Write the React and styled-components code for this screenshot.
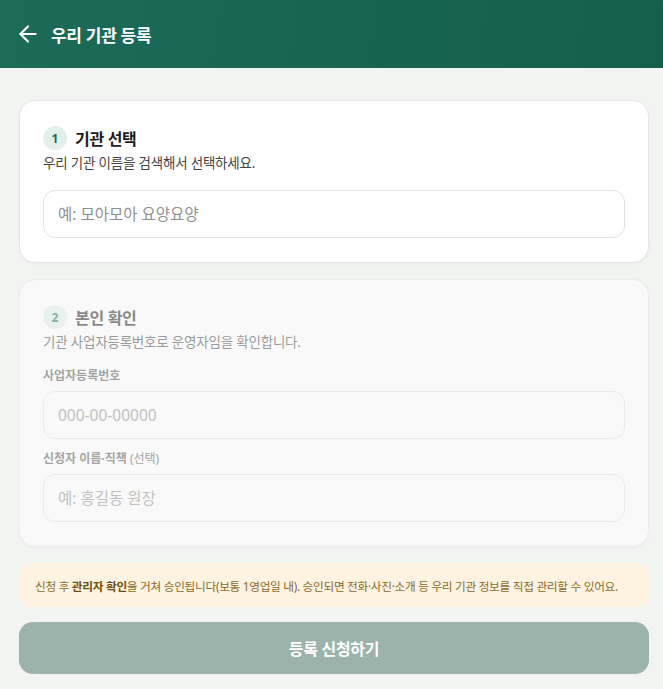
import React from "react";
import styled, { createGlobalStyle } from "styled-components";

const GlobalStyle = createGlobalStyle`
  * { box-sizing: border-box; }
  body {
    margin: 0;
    background: #f2f4f2;
    font-family: "Noto Sans", "Noto Sans CJK KR", sans-serif;
    color: #1c1c1c;
  }
`;

const Page = styled.div`
  min-height: 689px;
  background: #f2f4f2;
`;

const Header = styled.header`
  height: 68px;
  display: flex;
  align-items: center;
  gap: 10px;
  padding: 0 15px;
  background: linear-gradient(100deg, #1c6b58 0%, #145e4d 100%);
  color: #fff;
  h1 {
    margin: 0;
    font-size: 17px;
    font-weight: 700;
    letter-spacing: -0.3px;
  }
`;

const BackButton = styled.button`
  border: 0;
  background: none;
  padding: 0;
  display: flex;
  color: #fff;
  cursor: pointer;
`;

const Main = styled.main`
  padding: 32px 14px 15px 19px;
  display: flex;
  flex-direction: column;
`;

const Card = styled.section`
  background: #fff;
  border: 1px solid #e4e7e4;
  border-radius: 16px;
  padding: 25px 23px 24px;
  box-shadow: 0 1px 3px rgba(0, 0, 0, 0.04);
  opacity: ${(p) => (p.$disabled ? 0.5 : 1)};
  & + & {
    margin-top: 16px;
  }
`;

const StepHead = styled.div`
  display: flex;
  align-items: center;
  gap: 8px;
  h2 {
    margin: 0;
    font-size: 16px;
    font-weight: 700;
    letter-spacing: -0.3px;
  }
`;

const Badge = styled.span`
  width: 24px;
  height: 24px;
  border-radius: 50%;
  background: #e2efea;
  color: #1c6b58;
  font-size: 12px;
  font-weight: 700;
  display: flex;
  align-items: center;
  justify-content: center;
`;

const Desc = styled.p`
  margin: 3px 0 0;
  font-size: 13.5px;
  line-height: 20px;
  color: #444;
  letter-spacing: -0.2px;
`;

const Label = styled.label`
  display: block;
  margin: ${(p) => p.$top || 15}px 0 6px;
  font-size: 12px;
  line-height: 18px;
  font-weight: 700;
  color: #555;
  span {
    font-weight: 400;
  }
`;

const Input = styled.input`
  display: block;
  width: 100%;
  height: 48px;
  margin-top: ${(p) => p.$top || 0}px;
  border: 1px solid #e2e2e2;
  border-radius: 12px;
  padding: 0 14px;
  font-family: inherit;
  font-size: 15.5px;
  background: transparent;
  outline: none;
  &::placeholder {
    color: #8f8f8f;
  }
`;

const Notice = styled.div`
  margin-top: 16px;
  height: 44px;
  display: flex;
  align-items: center;
  padding: 0 16px;
  background: #fdf3e0;
  border-radius: 12px;
  font-size: 11.7px;
  color: #8a6a2c;
  letter-spacing: -0.3px;
  white-space: nowrap;
  b {
    color: #6e4f12;
  }
`;

const Submit = styled.button`
  margin-top: 15px;
  height: 52px;
  border: 0;
  border-radius: 14px;
  background: #9bb3ab;
  color: #fff;
  font-family: inherit;
  font-size: 16px;
  font-weight: 700;
  letter-spacing: -0.3px;
`;

const ArrowLeft = () => (
  <svg width="26" height="26" viewBox="0 0 24 24" fill="none" stroke="currentColor" strokeWidth="1.9" strokeLinecap="round" strokeLinejoin="round">
    <path d="M19 12H5" />
    <path d="M12 19l-7-7 7-7" />
  </svg>
);

export default function App() {
  return (
    <Page>
      <GlobalStyle />
      <Header>
        <BackButton aria-label="뒤로">
          <ArrowLeft />
        </BackButton>
        <h1>우리 기관 등록</h1>
      </Header>
      <Main>
        <Card>
          <StepHead>
            <Badge>1</Badge>
            <h2>기관 선택</h2>
          </StepHead>
          <Desc>우리 기관 이름을 검색해서 선택하세요.</Desc>
          <Input $top={17} placeholder="예: 모아모아 요양요양" />
        </Card>
        <Card $disabled>
          <StepHead>
            <Badge>2</Badge>
            <h2>본인 확인</h2>
          </StepHead>
          <Desc>기관 사업자등록번호로 운영자임을 확인합니다.</Desc>
          <Label $top={15}>사업자등록번호</Label>
          <Input placeholder="000-00-00000" disabled />
          <Label $top={11}>
            신청자 이름·직책 <span>(선택)</span>
          </Label>
          <Input placeholder="예: 홍길동 원장" disabled />
        </Card>
        <Notice>
          <span>
            신청 후 <b>관리자 확인</b>을 거쳐 승인됩니다(보통 1영업일 내). 승인되면 전화·사진·소개 등 우리 기관 정보를 직접 관리할 수 있어요.
          </span>
        </Notice>
        <Submit disabled>등록 신청하기</Submit>
      </Main>
    </Page>
  );
}
